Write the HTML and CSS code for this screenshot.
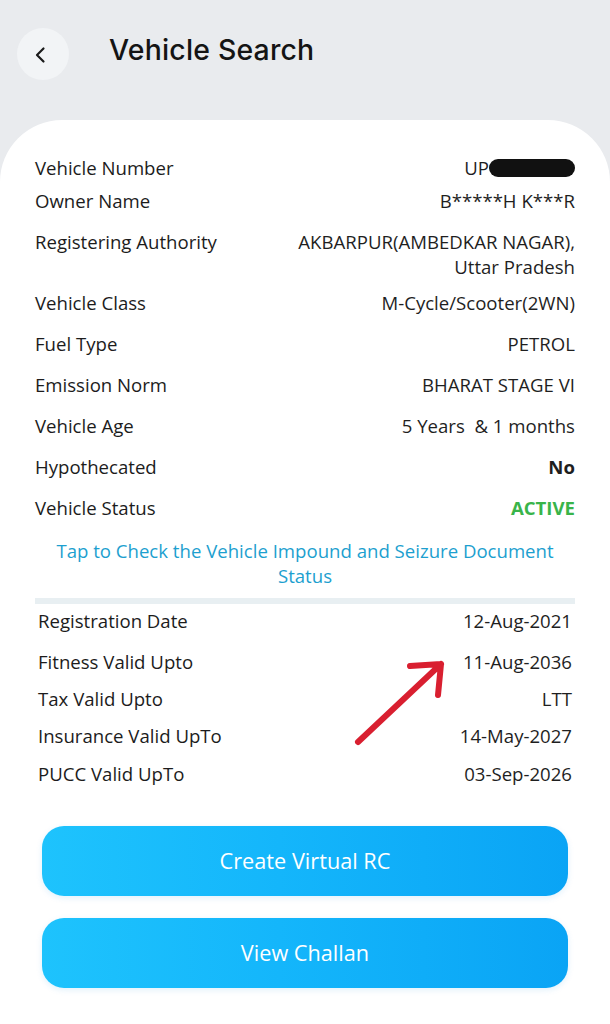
FILE: index.html
```html
<!DOCTYPE html>
<html lang="en">
<head>
<meta charset="utf-8">
<title>Vehicle Search</title>
<link rel="stylesheet" href="styles.css">
</head>
<body>
<div class="screen">
  <header class="topbar">
    <button class="back" aria-label="Back">
      <svg width="16" height="20" viewBox="0 0 16 20"><path d="M10.5 3.5 L4 10 L10.5 16.5" fill="none" stroke="#1a1a1a" stroke-width="2.2" stroke-linecap="round" stroke-linejoin="round"/></svg>
    </button>
    <h1 class="title">Vehicle Search</h1>
  </header>

  <main class="card">
    <section class="details">
      <div class="row row-first"><span class="label">Vehicle Number</span><span class="value">UP<span class="redact"></span></span></div>
      <div class="row row-tight"><span class="label">Owner Name</span><span class="value">B*****H K***R</span></div>
      <div class="row"><span class="label">Registering Authority</span><span class="value">AKBARPUR(AMBEDKAR NAGAR),<br>Uttar Pradesh</span></div>
      <div class="row row-after-multi"><span class="label">Vehicle Class</span><span class="value">M-Cycle/Scooter(2WN)</span></div>
      <div class="row"><span class="label">Fuel Type</span><span class="value">PETROL</span></div>
      <div class="row"><span class="label">Emission Norm</span><span class="value">BHARAT STAGE VI</span></div>
      <div class="row"><span class="label">Vehicle Age</span><span class="value">5 Years &nbsp;&amp; 1 months</span></div>
      <div class="row"><span class="label">Hypothecated</span><span class="value value-bold">No</span></div>
      <div class="row"><span class="label">Vehicle Status</span><span class="value value-active">ACTIVE</span></div>
    </section>

    <p class="impound-link">Tap to Check the Vehicle Impound and Seizure Document Status</p>

    <div class="separator"></div>

    <section class="validity">
      <div class="row"><span class="label">Registration Date</span><span class="value">12-Aug-2021</span></div>
      <div class="row row-wide"><span class="label">Fitness Valid Upto</span><span class="value">11-Aug-2036</span></div>
      <div class="row"><span class="label">Tax Valid Upto</span><span class="value">LTT</span></div>
      <div class="row"><span class="label">Insurance Valid UpTo</span><span class="value">14-May-2027</span></div>
      <div class="row"><span class="label">PUCC Valid UpTo</span><span class="value">03-Sep-2026</span></div>
      <svg class="arrow" width="110" height="100" viewBox="0 0 110 100">
        <path d="M8 88 L91 10 M60 12 L91 10 L88 41" fill="none" stroke="#d91f30" stroke-width="6" stroke-linecap="round" stroke-linejoin="round"/>
      </svg>
    </section>

    <div class="actions">
      <button class="cta">Create Virtual RC</button>
      <button class="cta">View Challan</button>
    </div>
  </main>
</div>
</body>
</html>
```

FILE: styles.css
```css
* { box-sizing: border-box; }

html, body {
  margin: 0;
  padding: 0;
  background: #e9ebee;
}

body {
  font-family: "Open Sans", "Noto Sans", sans-serif;
  color: #1c1c1c;
}

.screen {
  width: 610px;
  min-height: 1024px;
  display: flex;
  flex-direction: column;
}

.topbar {
  height: 120px;
  display: flex;
  align-items: flex-start;
  padding: 28px 0 0 17px;
  gap: 40px;
}

.back {
  width: 52px;
  height: 52px;
  border-radius: 50%;
  border: none;
  background: #f2f4f6;
  display: flex;
  align-items: center;
  justify-content: center;
  padding: 2px 4px 0 0;
  margin: 0;
}

.title {
  margin: 0;
  font-family: "Inter", "Noto Sans", sans-serif;
  font-weight: 500;
  font-size: 28.4px;
  line-height: 44px;
  color: #141414;
  letter-spacing: 0.2px;
}

.card {
  flex: 1;
  background: #ffffff;
  border-radius: 62px 62px 0 0;
  padding: 35px 35px 0 35px;
}

.row {
  display: flex;
  justify-content: space-between;
  align-items: flex-start;
  font-size: 18.6px;
  line-height: 25px;
}

.details {
  display: flex;
  flex-direction: column;
  gap: 16px;
}

.details .row-tight { margin-top: -8px; }
.details .row-after-multi { margin-top: -5px; }

.label { color: #1c1c1c; }

.value {
  color: #1f1f1f;
  text-align: right;
}

.value-bold { font-weight: 700; }

.value-active {
  font-weight: 700;
  color: #39b44a;
}

.redact {
  display: inline-block;
  width: 86px;
  height: 18px;
  margin-left: 0;
  vertical-align: -2px;
  background: #111;
  border-radius: 9px;
}

.impound-link {
  margin: 18px 0 0;
  text-align: center;
  color: #1d9fcf;
  font-size: 18.6px;
  line-height: 25px;
  padding: 0 6px;
}

.separator {
  height: 6px;
  margin-top: 10px;
  background: #e8eff2;
}

.validity {
  position: relative;
  display: flex;
  flex-direction: column;
  gap: 12.3px;
  padding: 4px 3px 0 3px;
}

.validity .row-wide { margin-top: 3.5px; }

.arrow {
  position: absolute;
  left: 315px;
  top: 50px;
}

.actions {
  display: flex;
  flex-direction: column;
  gap: 22px;
  margin: 40px 7px 0 7px;
}

.cta {
  height: 70px;
  border: none;
  border-radius: 22px;
  background: linear-gradient(90deg, #1ec3fd 0%, #14b6fb 45%, #0aa4f5 100%);
  color: #ffffff;
  font-family: "Open Sans", "Noto Sans", sans-serif;
  font-size: 21.7px;
  box-shadow: 0 2px 6px rgba(10, 140, 220, 0.12);
}
```
